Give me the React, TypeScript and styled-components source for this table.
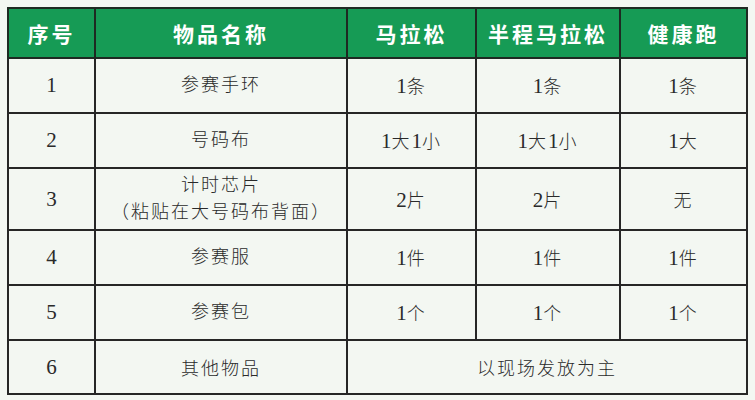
import React from "react";
import styled, { createGlobalStyle } from "styled-components";

type Row = { no: string; name: string[]; cells: string[] };

const rows: Row[] = [
  { no: "1", name: ["参赛手环"], cells: ["1条", "1条", "1条"] },
  { no: "2", name: ["号码布"], cells: ["1大1小", "1大1小", "1大"] },
  { no: "3", name: ["计时芯片", "（粘贴在大号码布背面）"], cells: ["2片", "2片", "无"] },
  { no: "4", name: ["参赛服"], cells: ["1件", "1件", "1件"] },
  { no: "5", name: ["参赛包"], cells: ["1个", "1个", "1个"] },
];

const heights = [55, 55, 62, 55, 55];

// 数字用更大的衬线字号显示
const withNums = (text: string) =>
  text.split(/(\d+)/).map((part, i) =>
    /^\d+$/.test(part) ? <Num key={i}>{part}</Num> : <React.Fragment key={i}>{part}</React.Fragment>
  );

const App = () => {
  return (
    <Page>
      <GlobalStyle />
      <Table>
        <colgroup>
          <col style={{ width: 87 }} />
          <col style={{ width: 252 }} />
          <col style={{ width: 129 }} />
          <col style={{ width: 144 }} />
          <col style={{ width: 127 }} />
        </colgroup>
        <thead>
          <tr>
            <HeadCell>序号</HeadCell>
            <HeadCell>物品名称</HeadCell>
            <HeadCell>马拉松</HeadCell>
            <HeadCell>半程马拉松</HeadCell>
            <HeadCell>健康跑</HeadCell>
          </tr>
        </thead>
        <tbody>
          {rows.map((r, i) => (
            <BodyRow key={r.no} $h={heights[i]}>
              <Cell>{withNums(r.no)}</Cell>
              <Cell>
                {r.name.map((n) => (
                  <Line key={n}>{n}</Line>
                ))}
              </Cell>
              {r.cells.map((c, j) => (
                <Cell key={j}>{withNums(c)}</Cell>
              ))}
            </BodyRow>
          ))}
          <BodyRow $h={54}>
            <Cell>{withNums("6")}</Cell>
            <Cell>其他物品</Cell>
            <Cell colSpan={3}>以现场发放为主</Cell>
          </BodyRow>
        </tbody>
      </Table>
    </Page>
  );
};

const GlobalStyle = createGlobalStyle`
  html, body {
    margin: 0;
    background: #f3f7f2;
  }
`;

/** 页面 */
const Page = styled.div`
  width: 755px;
  height: 400px;
  padding: 7px 0 0 7px;
  box-sizing: border-box;
  background: #f3f7f2;
`;

/** 表格 */
const Table = styled.table`
  width: 740px;
  border-collapse: collapse;
  table-layout: fixed;
  border: 2px solid #1e1e1e;
`;

/** 表头单元格 */
const HeadCell = styled.th`
  height: 48px;
  padding: 0;
  background: #169b55;
  color: #ffffff;
  border: 2px solid #1e2a22;
  font-family: "Noto Sans CJK SC", sans-serif;
  font-weight: 700;
  font-size: 21px;
  letter-spacing: 3px;
  text-align: center;
  vertical-align: middle;
`;

/** 表体行 */
const BodyRow = styled.tr<{ $h: number }>`
  height: ${({ $h }) => $h}px;
`;

/** 表体单元格 */
const Cell = styled.td`
  padding: 0;
  border: 2px solid #262626;
  color: #2a2a2a;
  font-family: "Liberation Serif", "Noto Sans CJK SC", serif;
  font-weight: 300;
  font-size: 18px;
  letter-spacing: 2px;
  text-align: center;
  vertical-align: middle;
`;

/** 数字 */
const Num = styled.span`
  font-family: "Liberation Serif", serif;
  font-weight: 400;
  font-size: 21px;
  letter-spacing: 0;
`;

/** 单元格内文字行 */
const Line = styled.div`
  line-height: 27px;
`;

export default App;
